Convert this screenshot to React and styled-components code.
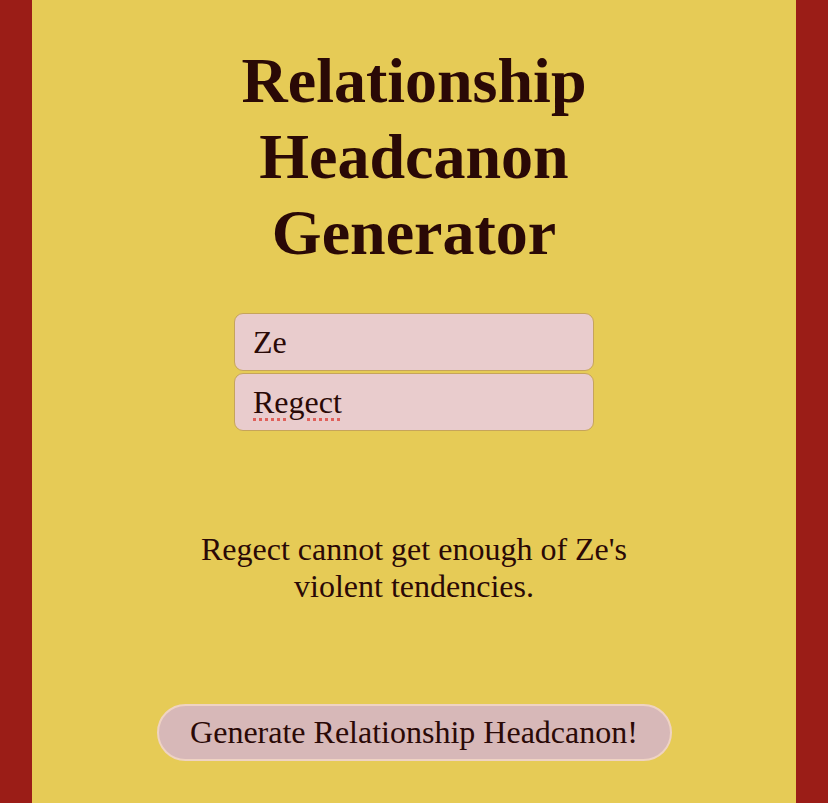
import React, { useState } from 'react';
import styled, { createGlobalStyle } from 'styled-components';

const GlobalStyle = createGlobalStyle`
  html, body {
    margin: 0;
    padding: 0;
    background: #9b1d17;
    font-family: "Liberation Serif", "Times New Roman", serif;
  }
`;

const Page = styled.div`
  width: 764px;
  min-height: 803px;
  margin: 0 auto;
  background: #e6cb56;
  color: #2a0906;
  display: flex;
  flex-direction: column;
  align-items: center;
  padding-top: 43px;
  box-sizing: border-box;
`;

const Title = styled.h1`
  margin: 0;
  width: 420px;
  text-align: center;
  font-size: 64px;
  line-height: 76px;
  font-weight: bold;
`;

const Fields = styled.div`
  margin-top: 42px;
  display: flex;
  flex-direction: column;
  gap: 2px;
`;

const FieldWrap = styled.div`
  position: relative;
`;

const Field = styled.input`
  width: 360px;
  height: 58px;
  box-sizing: border-box;
  padding: 0 18px;
  border: 1px solid #c6a45a;
  border-radius: 9px;
  background: #e9cccd;
  color: #2a0906;
  font-family: inherit;
  font-size: 32px;
  outline: none;
`;

const SpellMark = styled.span`
  position: absolute;
  left: 19px;
  top: 10px;
  font-size: 32px;
  line-height: 37px;
  color: transparent;
  pointer-events: none;
  text-decoration: underline dotted #e0605a;
  text-decoration-thickness: 3px;
  text-underline-offset: 6px;
`;

const Result = styled.p`
  margin: 100px 0 0;
  width: 480px;
  text-align: center;
  font-size: 32px;
  line-height: 37px;
`;

const GenerateButton = styled.button`
  margin-top: 99px;
  width: 515px;
  height: 57px;
  border: 2px solid #efd3c3;
  border-radius: 29px;
  background: #d7b8b8;
  color: #2a0906;
  font-family: inherit;
  font-size: 32px;
  cursor: pointer;
`;

export default function App() {
  const [first, setFirst] = useState('Ze');
  const [second, setSecond] = useState('Regect');

  return (
    <>
      <GlobalStyle />
      <Page>
        <Title>Relationship Headcanon Generator</Title>
        <Fields>
          <FieldWrap>
            <Field value={first} onChange={(e) => setFirst(e.target.value)} />
          </FieldWrap>
          <FieldWrap>
            <Field value={second} onChange={(e) => setSecond(e.target.value)} />
            <SpellMark>{second}</SpellMark>
          </FieldWrap>
        </Fields>
        <Result>{`${second} cannot get enough of ${first}'s violent tendencies.`}</Result>
        <GenerateButton>Generate Relationship Headcanon!</GenerateButton>
      </Page>
    </>
  );
}
